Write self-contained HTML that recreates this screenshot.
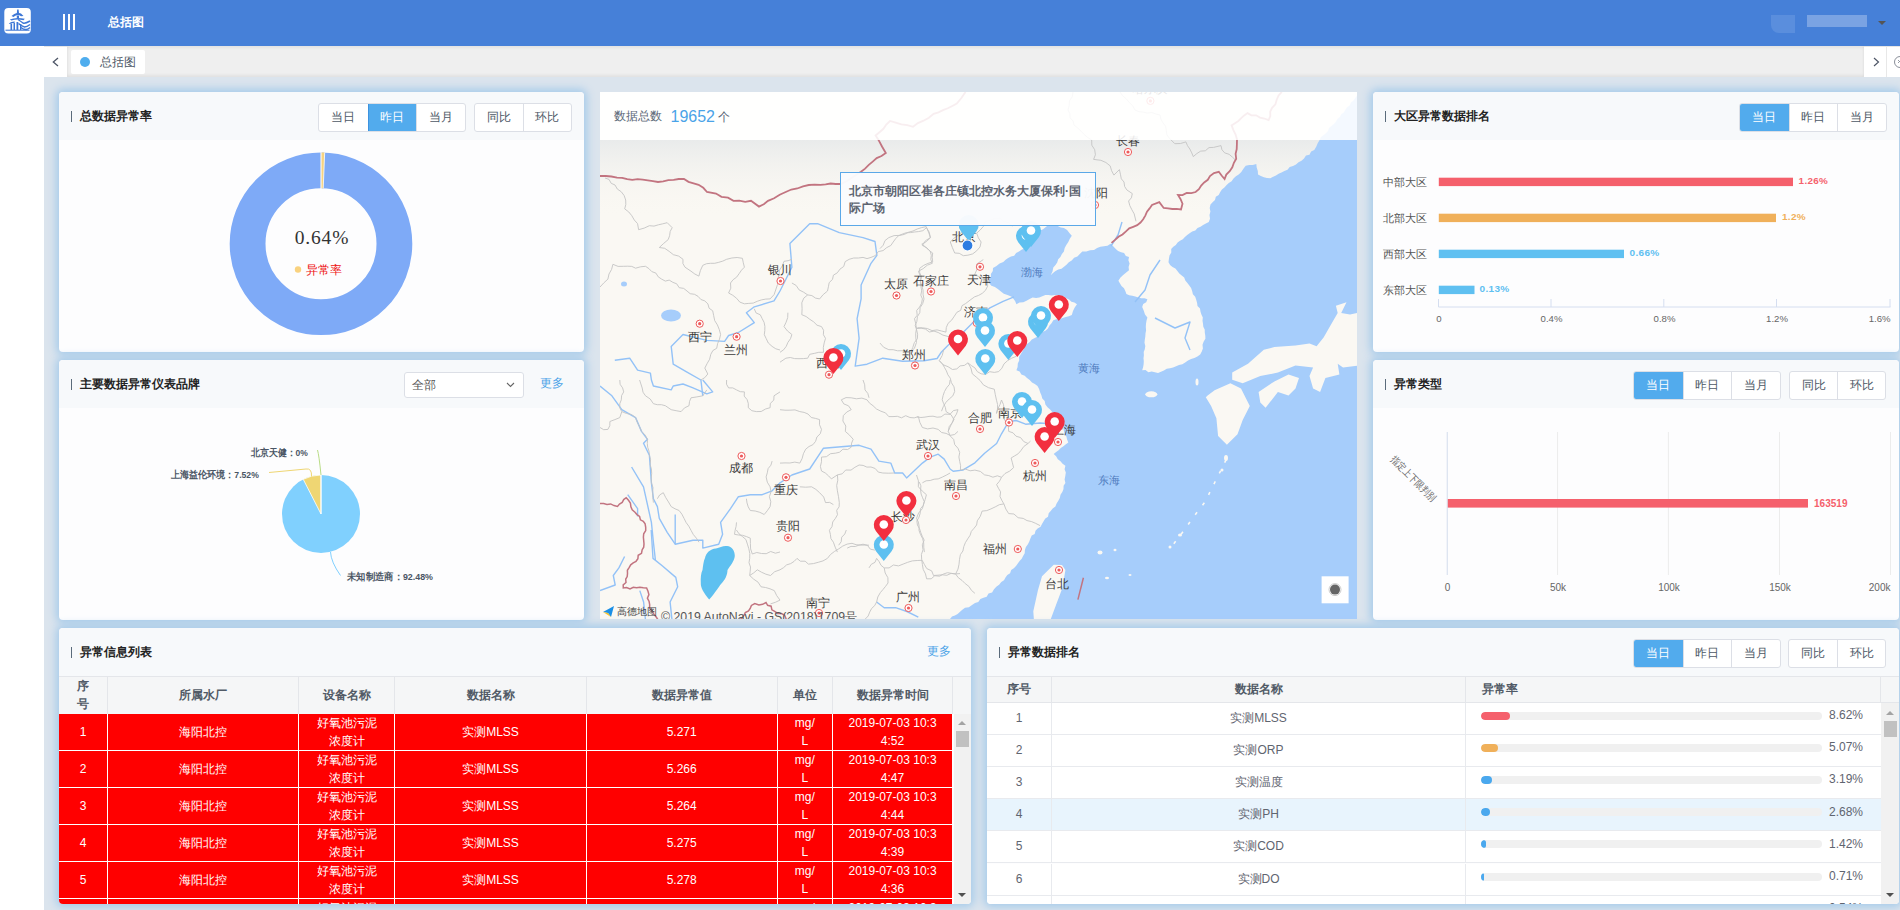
<!DOCTYPE html>
<html><head><meta charset="utf-8">
<style>
*{box-sizing:border-box;margin:0;padding:0}
html,body{width:1900px;height:910px;overflow:hidden;background:#fff;font-family:"Liberation Sans",sans-serif;color:#333}
.abs{position:absolute}
#hdr{position:absolute;left:0;top:0;width:1900px;height:46px;background:#4680d8}
#tabs{position:absolute;left:67px;top:46px;width:1797px;height:31px;background:#efefef;box-shadow:inset 0 -2px 3px rgba(0,0,0,.06), inset 0 2px 3px rgba(0,0,0,.05)}
#content{position:absolute;left:44px;top:77px;width:1856px;height:833px;background:#dbe4ed}
.panel{position:absolute;background:#fdfdfe;border-radius:4px;box-shadow:0 0 9px 3px #a6cbea;overflow:hidden}
.ph{position:absolute;left:0;top:0;width:100%;height:48px;background:#f7f9fb}
.bar{position:absolute;left:12px;top:19px;width:1.4px;height:11px;background:#5a6b7b}
.ttl{position:absolute;left:21px;top:16px;font-size:12px;font-weight:bold;color:#222;line-height:16px;white-space:nowrap}
.btns{position:absolute;display:flex;border:1px solid #dcdfe6;border-radius:3px;background:#fff;height:29px;overflow:hidden}
.btn{width:48.5px;height:27px;line-height:27px;text-align:center;font-size:12px;color:#4d5866;border-left:1px solid #dcdfe6}
.btn:first-child{border-left:none}
.b2 .btn{width:47.8px}
.btn.on{background:#52abed;color:#fff;border-color:#3d93e0}
.more{position:absolute;font-size:12px;color:#4aa3e8}
.thead{display:flex;background:#f5f6f7;border-top:1px solid #e4e6ea}
.hc{height:37px;border-right:1px solid #e4e6ea;font-size:12px;font-weight:bold;color:#515a66;text-align:center;display:flex;align-items:center;justify-content:center;line-height:18px;padding-bottom:2px}
.rrow{position:absolute;left:0;width:894px;height:37px;display:flex;background:#ff0000;border-bottom:1px solid #fff}
.rc{height:36px;border-right:1px solid #fff;color:#fff;font-size:12px;font-weight:normal;display:flex;align-items:center;justify-content:center;text-align:center;line-height:18px}
.thead2{display:flex;background:#f5f6f7;border-top:1px solid #e4e6ea;border-bottom:1px solid #e4e6ea}
.hc2{height:25.5px;line-height:25px;border-right:1px solid #e4e6ea;font-size:12px;font-weight:bold;color:#515a66}
.brow{position:absolute;left:0;width:894px;height:32.2px;display:flex;border-bottom:1px solid #e8eaee}
.bc{height:31.2px;line-height:31px;border-right:1px solid #e8eaee;font-size:12px;color:#5f6570;text-align:center}
.trk{position:absolute;left:15px;top:9px;width:341px;height:8px;border-radius:4px;background:#f0f0f0;overflow:hidden}
.fil{height:8px;border-radius:4px}
.pct{position:absolute;right:18px;top:-2.5px;font-size:12px;color:#5f6570}
</style></head><body>
<div id="hdr">
  <svg class="abs" style="left:4px;top:8px" width="27" height="26" viewBox="0 0 27 26">
  <rect x="0.3" y="0" width="26.5" height="25.5" rx="4" fill="#fff"/>
  <g fill="#3d77d6">
    <path d="M13.2,1.5 L14.6,1.5 L15,5 L12.8,5Z"/>
    <path d="M7.5,8 Q10,5.5 13.5,4.8 Q17,4.5 19.5,8 L17,8.3 Q14.5,6.5 13.5,7 Q11,7.3 9.5,9Z"/>
    <rect x="12.8" y="7.5" width="2.2" height="3"/>
    <path d="M5.8,11.5 Q12,8.8 20.8,10.8 L19.5,12.3 Q13,10.6 7.5,12.5Z"/>
    <path d="M4.8,15.5 Q7,13.4 10.8,13.5 L10.5,15 Q7.5,14.8 6,16Z"/>
    <rect x="6.5" y="15.5" width="1.6" height="6.5"/><rect x="9.5" y="15" width="1.5" height="7"/><rect x="12.5" y="14" width="1.8" height="8"/><rect x="16" y="16" width="1.4" height="6"/>
    <rect x="1.5" y="21.6" width="24" height="1.3" opacity="0.8"/>
  </g>
  <g fill="none" stroke="#3d77d6" stroke-width="1.5">
    <path d="M14,11.5 Q17,13.5 19,15 Q21,16 26,13"/>
    <path d="M14.5,15.5 Q18,18.5 20.5,19 Q23,19 26,16.5"/>
    <path d="M17,19.5 Q20,22 22.5,21.5 Q24.5,21 26,19.5"/>
  </g>
</svg>
  <div class="abs" style="left:63px;top:14px;width:2px;height:16px;background:#fff"></div>
  <div class="abs" style="left:68px;top:14px;width:2px;height:16px;background:#fff"></div>
  <div class="abs" style="left:73px;top:14px;width:2px;height:16px;background:#fff"></div>
  <div class="abs" style="left:108px;top:14px;font-size:12px;font-weight:bold;color:#fff;line-height:16px">总括图</div>
  <div class="abs" style="left:1771px;top:15px;width:24px;height:18px;background:#5a8edd;border-radius:0 0 0 8px"></div>
  <div class="abs" style="left:1807px;top:15px;width:60px;height:12px;background:#7aa3e3"></div>
  <div class="abs" style="left:1878px;top:21px;width:0;height:0;border-left:4px solid transparent;border-right:4px solid transparent;border-top:4px solid #555"></div>
</div>
<div class="abs" style="left:44px;top:46px;width:1856px;height:1px;background:#e6e6e6"></div>
<div id="tabs">
  <div class="abs" style="left:4px;top:4px;width:74px;height:23.5px;background:#fff;border-radius:2px"></div>
  <div class="abs" style="left:13px;top:11px;width:10px;height:10px;border-radius:50%;background:#4fadee"></div>
  <div class="abs" style="left:32.5px;top:7.5px;font-size:12px;line-height:16px;color:#4d5866">总括图</div>
</div>
<svg class="abs" style="left:50px;top:55px" width="12" height="14" viewBox="0 0 12 14"><path d="M8,3 L3.3,7 L8,11" fill="none" stroke="#4d5566" stroke-width="1.3"/></svg>
<svg class="abs" style="left:1869px;top:54px" width="14" height="16" viewBox="0 0 14 16"><path d="M5,4 L9.5,8 L5,12" fill="none" stroke="#4d5566" stroke-width="1.15"/></svg>
<div class="abs" style="left:1885.5px;top:47px;width:1px;height:30px;background:#e8e8e8"></div>
<svg class="abs" style="left:1890px;top:54px" width="10" height="16" viewBox="0 0 10 16"><circle cx="10" cy="8" r="5.5" fill="none" stroke="#8a8f99" stroke-width="1"/><path d="M8,6 L11,9 M11,6 L8,9" stroke="#8a8f99" stroke-width="0.9"/></svg>
<div id="content"></div>

<!-- P1 -->
<div class="panel" style="left:59px;top:92px;width:525px;height:260px">
  <div class="ph"><div class="bar"></div><div class="ttl">总数据异常率</div>
    <div class="btns" style="left:259px;top:11px"><div class="btn">当日</div><div class="btn on">昨日</div><div class="btn">当月</div></div>
    <div class="btns b2" style="left:415px;top:11px"><div class="btn">同比</div><div class="btn">环比</div></div>
  </div>
</div>
<svg class="abs" style="left:59px;top:140px" width="525" height="212" viewBox="59 140 525 212">
  <circle cx="321" cy="243.8" r="73.4" fill="none" stroke="#7eaaf7" stroke-width="35.8"/>
  <path d="M321.00,152.50A91.3,91.3 0 0 1 324.66,152.57L323.23,188.34A55.5,55.5 0 0 0 321.00,188.30Z" fill="#f6d380"/>
  <line x1="321" y1="150" x2="321" y2="190" stroke="#fff" stroke-width="1"/>
  <line x1="324.66" y1="152.57" x2="323.23" y2="188.34" stroke="#fff" stroke-width="0.8"/>
  <text x="322" y="243.6" text-anchor="middle" font-family="Liberation Serif" font-size="19.5" letter-spacing="0.8" fill="#333">0.64%</text>
  <circle cx="298" cy="269.5" r="3.2" fill="#f9d27f"/>
  <text x="306" y="273.8" font-size="12" fill="#ee1111">异常率</text>
</svg>
<!-- Map -->
<!--MAP--><svg class="abs" style="left:600px;top:92px" width="757" height="527" viewBox="600 92 757 527" font-family="Liberation Sans">
<defs><linearGradient id="fog" x1="0" y1="0" x2="0" y2="1"><stop offset="0" stop-color="#e9ebeb"/><stop offset="1" stop-color="#f9f7f1" stop-opacity="0"/></linearGradient></defs>
<rect x="600" y="92" width="757" height="527" fill="#faf8f3"/>
<rect x="600" y="140" width="757" height="75" fill="url(#fog)"/>
<path d="M1357.0,95.5 L1355.3,98.0 L1353.5,100.6 L1350.9,102.4 L1349.7,105.4 L1347.1,107.2 L1345.4,109.7 L1343.8,112.4 L1341.2,114.2 L1339.9,117.1 L1337.4,119.0 L1335.9,121.8 L1333.9,124.1 L1331.5,126.0 L1329.0,127.9 L1328.0,131.1 L1325.9,133.3 L1323.4,135.2 L1321.0,137.1 L1319.6,140.0 L1317.7,143.3 L1316.2,146.8 L1314.3,150.0 L1311.1,151.4 L1309.5,154.7 L1306.0,155.6 L1304.0,158.5 L1301.5,160.8 L1298.5,162.3 L1296.0,164.6 L1293.0,166.1 L1289.7,167.1 L1287.5,169.8 L1284.4,171.1 L1281.5,172.4 L1278.6,173.7 L1276.0,175.6 L1273.1,176.7 L1270.3,178.2 L1267.0,178.1 L1263.9,177.2 L1260.9,176.0 L1258.0,174.6 L1257.8,171.0 L1256.7,167.6 L1256.3,164.1 L1252.8,165.0 L1249.2,165.1 L1245.7,165.8 L1243.4,168.8 L1241.3,171.9 L1238.7,174.6 L1235.9,176.3 L1233.5,178.6 L1231.6,181.3 L1228.8,183.0 L1226.4,185.2 L1224.4,187.6 L1221.9,189.6 L1220.1,192.2 L1218.7,195.1 L1215.8,196.7 L1215.0,200.1 L1212.6,202.2 L1210.5,204.5 L1209.7,208.0 L1210.4,211.6 L1209.5,215.1 L1210.0,218.7 L1208.8,222.1 L1205.9,223.4 L1203.1,224.9 L1200.5,226.8 L1197.5,227.9 L1195.3,230.4 L1192.2,231.4 L1189.6,233.3 L1187.2,235.1 L1184.9,237.1 L1182.8,239.2 L1180.0,240.7 L1177.6,242.5 L1175.8,245.1 L1173.3,246.8 L1171.2,249.0 L1171.3,252.5 L1169.5,255.6 L1168.9,258.9 L1168.5,262.3 L1170.1,265.1 L1172.5,267.1 L1175.4,268.6 L1177.4,270.9 L1179.3,273.4 L1181.7,275.4 L1184.2,277.6 L1185.3,280.6 L1187.4,283.0 L1189.3,285.6 L1191.1,288.1 L1192.2,291.2 L1192.9,294.3 L1195.2,296.8 L1196.2,299.8 L1197.1,302.9 L1197.5,306.1 L1200.0,308.5 L1200.5,311.7 L1201.5,314.7 L1202.8,317.6 L1202.5,320.7 L1203.0,323.7 L1203.3,326.7 L1204.7,329.6 L1204.8,332.7 L1205.3,335.7 L1205.4,338.7 L1203.7,341.6 L1202.5,344.8 L1202.9,348.4 L1201.8,351.5 L1200.2,354.5 L1197.4,356.4 L1194.4,357.9 L1191.1,359.0 L1188.0,360.4 L1185.2,362.4 L1182.4,364.3 L1179.0,365.0 L1176.1,366.3 L1173.1,367.5 L1170.0,368.3 L1166.7,368.8 L1163.9,370.4 L1161.0,371.8 L1158.0,373.0 L1154.9,372.3 L1151.7,371.6 L1148.4,372.2 L1145.5,370.1 L1142.2,370.3 L1143.1,367.3 L1143.6,364.4 L1143.8,361.3 L1143.5,358.2 L1143.9,355.2 L1143.7,352.1 L1144.8,349.2 L1145.3,346.1 L1144.5,342.8 L1144.8,339.7 L1145.3,336.5 L1145.5,333.4 L1146.1,330.2 L1145.8,327.0 L1146.0,323.8 L1146.5,320.7 L1147.4,317.6 L1145.0,314.4 L1143.7,310.6 L1142.2,307.0 L1143.2,303.9 L1146.2,302.2 L1147.4,299.2 L1144.5,298.2 L1141.2,298.3 L1138.3,297.4 L1135.3,296.4 L1132.3,295.7 L1129.2,295.3 L1126.4,293.9 L1125.3,290.9 L1124.0,288.2 L1121.5,286.0 L1120.0,283.4 L1118.4,280.7 L1120.5,277.5 L1123.2,274.9 L1126.2,272.6 L1129.0,270.2 L1128.6,266.9 L1129.6,263.6 L1128.4,260.3 L1129.0,257.0 L1125.9,256.1 L1124.1,253.1 L1121.1,252.2 L1118.1,251.1 L1115.8,249.0 L1113.2,246.3 L1110.5,243.8 L1107.5,245.8 L1103.9,246.2 L1100.3,246.7 L1097.1,248.1 L1094.0,250.0 L1090.1,250.2 L1086.3,251.5 L1082.3,251.6 L1079.8,254.0 L1077.4,256.5 L1074.1,257.8 L1071.7,260.4 L1068.8,262.2 L1066.5,264.8 L1064.0,266.8 L1061.5,268.7 L1058.3,269.6 L1055.5,271.1 L1053.0,273.0 L1050.7,275.3 L1052.5,271.5 L1053.3,267.4 L1055.5,265.1 L1057.2,262.4 L1058.2,259.2 L1060.4,256.9 L1061.9,254.1 L1063.9,251.6 L1064.7,248.1 L1066.3,244.9 L1068.3,241.9 L1069.8,238.8 L1071.8,235.8 L1069.4,233.0 L1067.1,230.0 L1063.9,228.0 L1060.7,227.6 L1057.7,226.1 L1054.5,225.5 L1051.3,225.0 L1048.0,225.3 L1045.5,227.2 L1043.1,229.2 L1040.2,230.5 L1039.0,233.4 L1037.5,236.1 L1035.9,238.7 L1033.6,240.9 L1032.2,243.7 L1029.2,244.7 L1026.6,246.3 L1024.3,248.5 L1021.5,249.8 L1019.0,251.6 L1016.1,252.9 L1014.2,255.7 L1011.0,256.6 L1008.1,257.9 L1005.6,259.8 L1003.3,262.0 L999.6,263.6 L996.5,266.0 L993.0,268.0 L992.8,271.1 L990.9,273.9 L990.9,277.1 L989.3,279.9 L989.0,283.0 L991.4,285.7 L994.9,286.9 L997.8,289.0 L1000.6,291.2 L1003.8,293.7 L1007.5,295.0 L1011.2,296.4 L1013.4,298.7 L1015.2,301.3 L1016.4,304.3 L1019.5,302.4 L1023.3,302.3 L1026.5,300.8 L1029.6,299.0 L1032.6,297.6 L1036.1,298.0 L1039.3,297.5 L1042.3,296.2 L1045.4,295.1 L1048.5,295.0 L1051.6,295.6 L1054.7,295.1 L1057.8,295.1 L1060.8,297.0 L1063.9,296.4 L1066.4,298.2 L1069.1,299.6 L1071.4,301.8 L1074.4,302.6 L1077.0,304.3 L1074.7,307.5 L1073.0,311.1 L1071.8,314.9 L1068.9,316.3 L1065.8,317.1 L1062.7,317.9 L1059.6,318.9 L1056.3,319.2 L1053.3,320.2 L1051.7,323.1 L1049.5,325.5 L1047.9,328.5 L1045.4,330.7 L1042.3,332.0 L1040.3,334.7 L1037.6,336.4 L1034.8,338.1 L1031.8,339.5 L1029.7,342.1 L1027.0,343.9 L1024.8,346.1 L1023.8,349.1 L1022.2,351.7 L1020.6,354.4 L1019.0,357.0 L1019.2,360.5 L1017.8,363.6 L1017.6,367.0 L1016.4,370.2 L1019.6,371.5 L1021.4,374.6 L1024.7,375.7 L1027.0,378.1 L1029.7,380.0 L1032.0,382.4 L1034.8,384.1 L1037.5,386.0 L1039.1,389.0 L1040.1,392.2 L1041.4,395.3 L1042.3,398.5 L1044.7,401.1 L1045.4,404.5 L1047.5,407.2 L1050.1,409.5 L1052.3,412.1 L1053.8,415.3 L1056.4,417.7 L1058.6,420.3 L1062.4,424.9 L1063.3,427.9 L1063.9,430.9 L1064.6,433.9 L1066.4,436.5 L1067.1,439.5 L1068.3,442.4 L1065.9,444.3 L1063.4,446.2 L1060.8,447.9 L1058.6,450.2 L1056.1,452.0 L1053.7,454.0 L1056.1,456.3 L1057.8,459.2 L1060.5,461.3 L1062.6,463.8 L1065.4,465.7 L1064.6,469.2 L1065.8,472.6 L1065.3,476.1 L1064.6,479.5 L1065.4,483.0 L1063.6,485.7 L1063.5,489.1 L1062.3,492.1 L1060.5,494.8 L1059.8,497.9 L1058.3,500.8 L1056.6,503.5 L1055.4,506.5 L1052.7,508.4 L1050.7,510.9 L1048.7,513.3 L1048.0,516.7 L1045.3,518.6 L1043.6,521.3 L1042.0,524.0 L1040.6,526.8 L1037.6,528.4 L1035.5,530.7 L1034.7,534.0 L1031.7,535.6 L1030.4,538.5 L1029.3,541.5 L1027.9,544.3 L1025.9,546.9 L1024.9,549.9 L1024.7,553.2 L1023.1,555.9 L1021.7,558.8 L1019.6,561.1 L1017.8,563.6 L1016.0,566.1 L1013.8,568.3 L1011.2,570.1 L1010.1,573.3 L1007.3,575.0 L1005.5,577.4 L1004.0,580.3 L1001.3,582.0 L999.1,584.7 L996.3,586.7 L994.0,589.3 L992.1,592.4 L988.5,593.6 L986.7,596.7 L983.5,597.8 L980.4,599.1 L978.3,602.1 L975.0,603.0 L972.0,605.1 L968.9,607.2 L965.0,607.8 L962.0,610.0 L959.8,612.1 L957.6,614.1 L954.9,615.5 L952.0,616.6 L950.0,619.0 L948.5,621.8 L948.0,625.0 L951.0,624.6 L954.0,624.4 L957.0,625.8 L960.0,625.1 L963.0,625.4 L966.0,624.3 L969.1,624.2 L972.1,625.3 L975.1,624.9 L978.1,624.2 L981.1,625.8 L984.1,625.2 L987.1,625.5 L990.1,624.3 L993.1,625.6 L996.1,624.2 L999.1,625.7 L1002.1,624.9 L1005.1,624.7 L1008.1,625.1 L1011.2,625.8 L1014.2,624.6 L1017.2,624.3 L1020.2,625.0 L1023.2,624.5 L1026.2,624.3 L1029.2,624.4 L1032.2,624.2 L1035.2,624.5 L1038.2,624.7 L1041.2,624.6 L1044.2,625.5 L1047.2,624.6 L1050.2,625.0 L1053.3,624.4 L1056.3,624.7 L1059.3,624.1 L1062.3,624.6 L1065.3,624.1 L1068.3,625.4 L1071.3,625.1 L1074.3,624.4 L1077.3,625.0 L1080.3,625.8 L1083.3,624.3 L1086.3,625.6 L1089.3,624.9 L1092.4,625.0 L1095.4,625.6 L1098.4,624.8 L1101.4,625.0 L1104.4,625.3 L1107.4,625.9 L1110.4,624.7 L1113.4,625.6 L1116.4,625.4 L1119.4,625.2 L1122.4,624.8 L1125.4,624.7 L1128.4,624.2 L1131.4,624.3 L1134.5,624.2 L1137.5,625.4 L1140.5,624.6 L1143.5,624.4 L1146.5,624.3 L1149.5,625.6 L1152.5,625.7 L1155.5,625.3 L1158.5,624.6 L1161.5,624.5 L1164.5,624.6 L1167.5,624.9 L1170.5,624.4 L1173.5,624.9 L1176.6,624.6 L1179.6,625.8 L1182.6,625.9 L1185.6,625.1 L1188.6,624.5 L1191.6,625.8 L1194.6,624.7 L1197.6,624.7 L1200.6,624.1 L1203.6,624.8 L1206.6,625.0 L1209.6,625.0 L1212.6,624.5 L1215.6,625.0 L1218.7,624.1 L1221.7,624.6 L1224.7,624.3 L1227.7,624.8 L1230.7,624.2 L1233.7,624.1 L1236.7,624.6 L1239.7,624.5 L1242.7,625.2 L1245.7,625.1 L1248.7,625.5 L1251.7,625.3 L1254.7,625.4 L1257.8,625.7 L1260.8,624.8 L1263.8,624.7 L1266.8,625.9 L1269.8,624.4 L1272.8,625.4 L1275.8,625.3 L1278.8,624.2 L1281.8,625.6 L1284.8,625.7 L1287.8,625.2 L1290.8,625.4 L1293.8,625.6 L1296.8,624.4 L1299.9,625.0 L1302.9,625.0 L1305.9,625.6 L1308.9,625.5 L1311.9,625.6 L1314.9,625.2 L1317.9,625.7 L1320.9,625.3 L1323.9,625.3 L1326.9,624.5 L1329.9,624.2 L1332.9,624.3 L1335.9,624.7 L1338.9,624.3 L1342.0,625.6 L1345.0,625.1 L1348.0,625.2 L1351.0,625.2 L1354.0,625.3 L1357.0,625.0 L1360.0,625.0 L1359.1,622.0 L1360.5,619.0 L1360.4,616.0 L1360.0,613.0 L1360.1,609.9 L1360.3,606.9 L1359.2,603.9 L1360.4,600.9 L1359.6,597.9 L1359.2,594.9 L1359.6,591.9 L1360.4,588.9 L1359.5,585.9 L1360.4,582.8 L1360.9,579.8 L1360.0,576.8 L1359.8,573.8 L1360.0,570.8 L1360.3,567.8 L1360.5,564.8 L1360.2,561.8 L1360.3,558.8 L1359.2,555.7 L1359.4,552.7 L1359.6,549.7 L1360.4,546.7 L1359.6,543.7 L1360.1,540.7 L1359.1,537.7 L1359.2,534.7 L1359.6,531.6 L1360.3,528.6 L1360.3,525.6 L1360.3,522.6 L1359.6,519.6 L1360.0,516.6 L1359.9,513.6 L1359.9,510.6 L1359.3,507.6 L1360.7,504.5 L1359.5,501.5 L1360.9,498.5 L1360.8,495.5 L1359.1,492.5 L1359.9,489.5 L1360.6,486.5 L1360.8,483.5 L1359.9,480.5 L1359.6,477.4 L1359.5,474.4 L1360.8,471.4 L1359.5,468.4 L1360.1,465.4 L1359.4,462.4 L1360.0,459.4 L1360.8,456.4 L1359.3,453.4 L1360.6,450.3 L1360.0,447.3 L1360.7,444.3 L1360.4,441.3 L1359.5,438.3 L1360.7,435.3 L1360.0,432.3 L1359.1,429.3 L1359.1,426.3 L1360.0,423.2 L1359.9,420.2 L1359.6,417.2 L1359.4,414.2 L1359.7,411.2 L1359.7,408.2 L1360.6,405.2 L1359.1,402.2 L1360.5,399.2 L1360.6,396.1 L1359.3,393.1 L1360.8,390.1 L1360.4,387.1 L1360.7,384.1 L1359.6,381.1 L1359.8,378.1 L1359.8,375.1 L1360.9,372.1 L1360.2,369.0 L1359.7,366.0 L1359.9,363.0 L1359.6,360.0 L1359.2,357.0 L1359.3,354.0 L1360.6,351.0 L1359.6,348.0 L1360.8,344.9 L1359.5,341.9 L1359.6,338.9 L1360.0,335.9 L1359.4,332.9 L1359.8,329.9 L1360.8,326.9 L1360.7,323.9 L1360.6,320.9 L1360.2,317.8 L1360.7,314.8 L1360.8,311.8 L1360.1,308.8 L1360.4,305.8 L1359.2,302.8 L1360.4,299.8 L1359.9,296.8 L1360.5,293.8 L1360.3,290.7 L1359.6,287.7 L1359.2,284.7 L1360.8,281.7 L1359.3,278.7 L1359.9,275.7 L1359.7,272.7 L1359.6,269.7 L1360.4,266.7 L1360.9,263.6 L1359.6,260.6 L1360.3,257.6 L1359.6,254.6 L1360.1,251.6 L1359.8,248.6 L1359.4,245.6 L1359.4,242.6 L1359.5,239.6 L1360.7,236.5 L1360.0,233.5 L1359.5,230.5 L1360.7,227.5 L1360.9,224.5 L1359.9,221.5 L1359.4,218.5 L1359.4,215.5 L1359.3,212.5 L1359.7,209.4 L1359.3,206.4 L1359.5,203.4 L1359.6,200.4 L1360.1,197.4 L1360.7,194.4 L1360.4,191.4 L1359.8,188.4 L1359.8,185.4 L1360.0,182.3 L1359.8,179.3 L1359.7,176.3 L1359.2,173.3 L1359.6,170.3 L1360.8,167.3 L1359.3,164.3 L1360.0,161.3 L1360.2,158.2 L1360.7,155.2 L1359.5,152.2 L1359.6,149.2 L1359.5,146.2 L1359.8,143.2 L1359.9,140.2 L1360.8,137.2 L1360.6,134.2 L1360.7,131.1 L1359.1,128.1 L1359.2,125.1 L1360.4,122.1 L1360.7,119.1 L1360.0,116.1 L1360.2,113.1 L1359.1,110.1 L1359.8,107.1 L1360.8,104.0 L1360.6,101.0 L1360.6,98.0 L1360.9,95.0 L1360.0,92.0 Z" fill="#a6cdfb"/>
<path d="M1033.3,611.3 L1038.0,590.0 L1042.0,576.3 L1053.7,564.7 L1062.0,565.0 L1065.4,570.0 L1062.4,588.0 L1056.0,605.0 L1050.8,619.0 L1034.0,621.0 Z" fill="#faf8f3"/>
<path d="M1207.6,395.5 L1214.6,390.2 L1230.4,383.2 L1241.0,388.5 L1244.5,395.5 L1249.8,406.0 L1242.7,420.1 L1237.5,434.2 L1226.9,444.7 L1218.1,435.9 L1216.4,418.3 L1211.1,406.0 L1205.8,397.2 Z" fill="#faf8f3"/>
<path d="M1232.2,379.7 L1232.2,372.6 L1248.0,363.8 L1263.8,349.8 L1274.4,347.1 L1295.5,345.4 L1309.5,343.6 L1316.6,346.3 L1323.6,337.5 L1330.6,325.2 L1337.7,312.9 L1335.9,305.8 L1346.5,302.3 L1341.2,312.9 L1350.0,314.6 L1358.0,312.9 L1358.0,365.6 L1343.0,367.4 L1337.7,363.8 L1339.4,374.4 L1325.4,377.9 L1320.1,392.0 L1313.1,388.5 L1309.5,376.1 L1313.1,367.4 L1295.5,365.6 L1277.9,372.6 L1260.3,376.1 L1242.7,383.2 Z" fill="#faf8f3"/>
<path d="M1258.6,392.0 L1274.4,381.4 L1288.5,374.4 L1299.0,377.9 L1295.5,388.5 L1288.5,395.5 L1277.9,392.0 L1265.6,407.8 L1260.3,402.5 Z" fill="#faf8f3"/>
<ellipse cx="1151.3" cy="394.3" rx="6" ry="3" fill="#faf8f3"/>
<g fill="#faf8f3"><ellipse cx="1197" cy="382" rx="1.5" ry="3.5"/><ellipse cx="1226" cy="458" rx="2" ry="3"/><ellipse cx="1222" cy="470" rx="1.5" ry="1.5"/><path d="M1226,460 L1215,482 L1205,502 L1195,515 L1182,533 L1172,546" fill="none" stroke="#faf8f3" stroke-width="1.6" stroke-dasharray="3 9"/><ellipse cx="1170" cy="547" rx="1.5" ry="1.5"/><ellipse cx="1180" cy="535" rx="2" ry="1.5"/><ellipse cx="1100" cy="552.5" rx="2.5" ry="2"/><ellipse cx="1115" cy="550" rx="1.5" ry="1.2"/><ellipse cx="1130" cy="575" rx="1.5" ry="1"/><ellipse cx="1107" cy="578" rx="2" ry="1.2"/></g>
<ellipse cx="671" cy="315.4" rx="10" ry="6" fill="#a6cdfb"/>
<ellipse cx="624" cy="284" rx="3" ry="2.5" fill="#a6cdfb"/>
<g fill="none" stroke="#93c2f7" stroke-width="1.4" stroke-linejoin="round"><path d="M780.0,291.0 L774.0,300.9 L754.3,306.8 L746.4,312.7 L754.3,322.6 L738.4,332.5 L728.6,335.5 L724.6,341.4 L706.8,340.4 L683.0,334.5 L671.2,346.4 L673.2,364.2 L687.0,372.1 L700.9,380.0 L702.8,395.8"/><path d="M614.8,360.2 L629.7,358.2 L637.6,370.1 L650.4,373.1 L651.4,380.0 L653.4,386.0 L671.2,389.9 L673.2,386.0 L683.0,384.0 L693.0,387.9 L706.8,393.8 L712.7,391.9 L702.8,380.0"/><path d="M780.0,291.0 L791.9,267.2 L789.9,243.5 L809.7,223.7 L817.6,223.7 L839.3,232.6 L863.0,237.6 L875.0,241.5 L876.9,255.4 L871.0,263.3 L861.1,285.0 L861.1,298.9 L857.1,318.7 L859.1,338.4 L855.2,366.1 L867.0,364.2 L882.8,358.2 L902.6,361.2 L924.0,360.7 L937.1,358.5 L941.5,351.9 L948.1,345.3 L963.5,332.1 L974.5,321.1 L989.9,307.9 L1003.1,301.3 L1014.0,296.9"/><path d="M600.0,386.0 L611.9,395.8 L621.8,409.7 L635.6,417.6 L641.5,431.4 L647.5,439.3 L643.5,443.3 L649.4,455.2 L651.4,482.8 L653.4,498.7 L657.4,506.6 L659.3,518.4 L667.2,532.3 L675.2,544.2 L693.0,540.2 L702.8,540.2 L702.8,548.1 L718.7,544.2 L722.6,534.3 L720.6,522.4 L730.5,508.6 L738.4,496.7 L750.3,494.7 L762.2,494.7 L772.1,490.8 L780.0,482.8 L791.9,475.0 L803.7,471.0 L809.7,469.0 L823.5,448.2 L859.1,445.3 L871.0,449.2 L878.9,461.1 L890.8,463.1 L894.7,473.0 L902.6,473.0 L906.6,477.9 L922.4,463.1 L930.3,457.1 L938.2,454.2 L944.2,459.1 L950.1,469.0 L953.2,471.3 L962.8,470.1 L974.9,462.8 L984.6,453.2 L996.6,443.5 L1001.5,433.8 L1008.7,421.7 L1016.0,420.5 L1025.6,424.2 L1040.1,423.0 L1054.6,424.2"/><path d="M631.6,467.0 L643.5,486.8 L651.4,522.4 L653.4,542.2 L655.4,560.0"/><path d="M627.7,494.7 L637.6,508.6 L637.6,516.5"/><path d="M675.2,514.5 L675.2,544.2"/><path d="M651.2,530.0 L653.0,558.4 L662.5,566.0 L675.8,577.4 L677.7,586.8 L670.1,602.0 L672.0,620.0"/><path d="M624.6,556.5 L618.9,567.9 L613.3,575.5 L615.2,585.0 L600.0,590.6"/><path d="M639.8,590.6 L643.6,602.0 L645.5,620.0"/><path d="M876.6,602.0 L884.2,607.7 L895.6,607.7 L906.9,611.5 L918.3,617.2"/><path d="M1111.0,246.0 L1118.0,235.0 L1122.0,222.0"/><path d="M1160.0,260.0 L1150.0,275.0 L1145.0,290.0 L1135.0,302.0"/><path d="M1155.0,318.0 L1175.0,328.0 L1190.0,322.0 L1185.0,338.0 L1190.0,350.0"/></g>
<g fill="none" stroke="#c4c4c4" stroke-width="0.9" stroke-linejoin="round"><path d="M625.7,200.0 L625.8,204.5 L624.7,208.9 L628.7,211.9 L631.8,215.7 L634.3,220.0 L637.6,223.7 L638.6,229.7 L644.2,228.1 L649.4,225.7 L654.0,226.1 L658.4,224.8 L662.8,223.8 L667.2,222.7 L672.2,227.7 L670.2,231.4 L669.6,235.7 L668.2,239.6 L663.7,243.4 L659.3,247.5 L664.7,248.3 L669.2,251.4 L673.4,254.7 L678.7,256.1 L683.0,259.3 L682.9,263.5 L685.0,267.2 L691.0,271.2 L694.8,274.0 L698.9,276.1 L700.4,270.5 L702.8,265.3 L706.6,263.7 L710.6,263.3 L714.7,263.3 L718.8,262.3 L722.8,261.1 L726.6,259.3 L731.8,258.0 L737.1,257.5 L742.4,258.3 L743.3,262.8 L744.4,267.2 L741.5,270.2 L739.1,273.7 L736.6,277.2 L733.1,279.7 L730.5,283.0 L730.8,288.2 L728.6,293.0 L732.8,295.3 L736.6,298.3 L739.8,302.1 L744.4,303.8 L748.8,303.4 L753.2,303.1 L757.2,301.3 L761.4,299.9 L765.7,299.1 L770.1,298.9 L774.1,294.6 L776.0,289.0 L777.5,284.5 L777.5,279.7 L779.0,275.2 L779.5,270.1 L782.3,265.9 L784.0,261.3 L788.1,260.7 L791.9,259.3"/><path d="M600.0,287.0 L603.8,282.9 L607.9,279.1 L609.0,274.0 L611.6,269.4 L612.9,264.3 L618.1,266.4 L623.7,266.3 L627.8,266.2 L631.8,266.4 L635.6,268.2 L640.5,266.8 L645.5,266.3 L648.9,268.6 L651.8,271.6 L655.9,273.1 L658.2,276.8 L661.6,279.1 L665.3,281.1 L669.2,280.1 L672.8,282.3 L676.7,283.8 L679.2,287.7 L683.7,288.4 L687.0,291.0 L690.2,293.7 L694.5,294.3 L698.0,296.3 L700.9,299.5 L704.8,300.9 L707.9,303.9 L709.1,308.2 L712.7,310.8 L713.7,315.7 L714.7,320.6 L717.4,324.9 L719.3,329.6 L720.6,334.5 L719.5,339.2 L717.6,343.6 L716.7,348.3 L712.9,350.5 L710.8,354.3 L709.6,359.3 L707.1,363.6 L704.8,368.1 L707.8,374.0 L704.8,377.6 L700.9,380.0"/><path d="M754.3,308.8 L756.0,312.9 L760.3,314.8 L762.2,318.7 L764.1,322.4 L764.9,326.4 L764.8,330.5 L764.3,334.7 L766.1,338.4 L768.3,343.0 L772.1,346.4 L775.8,348.8 L780.0,350.0"/><path d="M625.7,200.0 L624.1,195.5 L621.3,191.8 L617.3,189.0 L615.0,185.0 L611.2,183.3 L609.0,179.4 L605.0,178.0"/><path d="M871.0,257.4 L875.3,255.6 L878.3,251.6 L883.1,250.6 L886.7,247.6 L890.8,245.5 L893.2,242.0 L895.7,238.6 L898.7,235.6 L902.5,234.0 L906.3,232.7 L910.4,232.6 L914.4,232.0 L918.4,231.6 L922.9,230.7 L926.4,227.7 L929.3,232.3 L930.3,237.6 L925.5,240.7 L922.4,245.5 L926.8,247.8 L930.3,251.4 L931.3,255.3 L930.8,259.5 L932.3,263.3 L927.3,265.2 L923.1,268.7 L918.4,271.2 L920.6,276.9 L920.4,283.0 L921.0,287.0 L921.7,290.9 L920.8,295.1 L922.4,298.9 L921.6,303.2 L919.6,307.0 L916.7,310.4 L917.2,315.2 L914.5,318.7 L915.7,323.6 L916.5,328.6 L915.7,333.2 L915.8,337.8 L916.5,342.4 L914.5,348.0 L910.5,352.3"/><path d="M916.5,328.6 L921.1,328.2 L925.4,329.0 L929.3,332.0 L934.0,331.1 L938.2,332.5 L942.9,335.1 L948.1,336.5 L952.2,336.9 L956.0,334.8 L960.0,334.5"/><path d="M791.9,283.0 L796.2,285.5 L799.1,289.9 L803.6,292.2 L807.7,294.9 L811.9,295.6 L815.5,298.1 L819.6,298.9 L823.2,294.6 L827.5,291.0 L828.4,286.8 L829.2,282.6 L832.5,279.4 L833.4,275.2 L837.3,272.8 L840.0,269.1 L843.7,266.5 L845.2,261.6 L849.2,259.3 L853.7,258.0 L858.4,258.0 L863.0,257.4 L867.0,258.6 L871.0,257.4"/><path d="M807.7,294.9 L803.8,298.1 L801.8,302.8 L802.1,308.8 L801.8,314.7 L806.1,316.5 L809.8,319.3 L813.6,321.8 L817.0,325.2 L821.5,326.6 L823.6,330.3 L823.4,334.7 L825.5,338.4 L824.2,342.9 L823.3,347.5 L823.5,352.3 L818.8,352.3 L814.3,353.4 L809.7,354.3 L807.7,358.2 L803.3,358.6 L799.0,358.7 L794.6,358.6 L790.3,357.5 L785.9,358.2 L780.0,362.2"/><path d="M787.9,312.7 L787.7,317.6 L786.1,322.2 L784.0,326.6 L787.5,331.0 L791.9,334.5 L790.5,338.7 L787.9,342.4 L786.2,346.4 L783.6,349.8 L780.0,352.3"/><path d="M950.3,242.0 L952.4,247.6 L954.7,253.0 L959.2,253.3 L963.3,255.7 L967.9,255.2 L972.7,253.9 L976.7,250.8 L980.0,247.0 L981.1,242.0 L978.4,237.9 L976.7,233.2 L971.7,233.9 L966.8,233.4 L962.0,232.0 L958.1,235.3 L953.8,238.3 L950.3,242.0"/><path d="M926.2,226.6 L928.5,232.0 L930.5,237.6 L926.6,241.5 L921.8,244.2 L925.6,247.0 L928.9,250.3 L932.7,253.0 L932.2,257.4 L932.7,261.8 L928.0,263.4 L923.6,265.4 L919.6,268.4 L919.7,272.8 L921.7,277.0 L920.4,281.6 L921.8,285.9 L923.1,290.2 L923.1,294.7 L924.0,299.1 L922.7,303.6 L920.1,307.7 L919.8,312.6 L917.4,316.7 L916.9,321.3 L915.2,325.5 L916.6,329.8 L917.6,334.2 L917.4,338.7 L914.3,342.7 L912.8,347.4 L910.8,351.9"/><path d="M917.4,327.7 L922.4,327.8 L927.3,328.5 L932.0,330.6 L937.1,329.9 L941.5,331.0 L945.9,332.1 L946.3,327.5 L948.1,323.3 L951.7,320.1 L954.3,316.2 L956.9,312.3 L960.7,310.3 L962.0,305.7 L965.7,303.5 L970.1,300.1 L974.5,296.9 L978.6,295.4 L982.3,293.3 L985.5,290.3 L987.6,286.2 L987.7,281.5"/><path d="M983.3,259.6 L976.7,264.0 L976.8,269.7 L974.5,274.9 L979.1,276.6 L983.7,278.4 L987.7,281.5"/><path d="M943.7,349.7 L942.2,355.5 L939.3,360.7 L943.0,364.7 L948.0,366.7 L952.5,369.5 L956.8,368.9 L960.1,365.9 L964.4,365.4 L967.9,362.9 L971.3,365.5 L974.9,367.9 L977.3,371.6 L981.1,373.8 L985.6,374.4 L989.8,371.7 L994.3,372.4 L998.7,371.6 L1001.9,368.2 L1004.0,363.9 L1007.5,360.7 L1011.7,358.2 L1016.3,356.3"/><path d="M939.3,360.7 L942.3,363.7 L944.4,367.3 L946.4,370.9 L947.9,374.8 L950.3,378.2 L951.4,382.7 L954.0,386.8 L954.7,391.4 L952.8,395.9 L949.2,399.0 L945.9,402.4 L943.3,406.6 L941.5,411.2"/><path d="M967.9,362.9 L970.9,368.0 L972.3,373.8 L976.3,377.1 L980.2,380.6 L983.3,384.8 L988.5,387.7 L994.3,389.2 L995.3,394.7 L996.5,400.2 L997.6,404.6 L997.5,409.0 L996.5,413.4 L997.9,408.8 L1000.0,404.5 L1001.5,400.0"/><path d="M880.0,248.6 L883.2,245.2 L885.0,240.6 L888.8,237.6 L894.1,235.6 L899.8,235.4 L904.4,234.4 L908.5,232.2 L913.0,231.0 L917.2,229.0 L921.6,227.6 L926.2,226.6"/><path d="M880.0,343.1 L883.7,347.3 L888.8,349.7 L893.2,349.7 L897.6,350.8 L902.0,350.7 L906.4,351.2 L910.8,351.9"/><path d="M976.7,233.2 L980.2,230.0 L983.3,226.5 L985.0,222.0 L989.9,220.3 L994.8,218.6 L1000.0,218.0 L1003.7,221.2 L1008.4,222.7 L1012.0,226.0 L1015.7,223.8 L1020.0,224.0"/><path d="M619.8,380.0 L620.1,384.3 L622.6,387.9 L623.7,391.9 L621.6,395.6 L621.3,399.8 L619.8,403.7 L619.8,407.9 L621.8,411.6 L619.8,417.6 L614.9,419.6 L609.9,421.5 L609.8,425.7 L607.9,429.4 L603.7,429.7 L600.0,427.5"/><path d="M639.6,380.0 L640.9,384.0 L642.2,388.0 L643.0,392.2 L645.5,395.8 L650.2,399.0 L653.4,403.7 L657.3,404.7 L661.4,404.7 L665.3,405.7 L671.2,409.7 L676.1,410.7 L681.1,411.6 L684.5,407.9 L689.0,405.7 L689.5,401.6 L691.0,397.8 L696.9,396.9 L702.8,395.8 L706.8,389.9"/><path d="M726.6,380.0 L726.5,384.2 L728.6,387.9 L732.8,387.9 L736.5,389.9 L740.3,391.7 L744.4,391.9 L744.2,396.1 L747.1,399.6 L748.3,403.5 L748.3,407.7 L751.8,410.7 L756.3,411.6 L761.2,411.5 L765.5,409.0 L770.1,407.7 L770.3,403.4 L773.8,400.1 L774.0,395.8 L780.0,391.9"/><path d="M772.1,461.1 L770.9,465.2 L768.1,468.6 L767.3,472.8 L766.1,476.9 L767.3,482.2 L770.1,486.8 L771.0,491.8 L769.4,496.7 L770.8,501.7 L770.1,506.6 L767.3,510.7 L764.2,514.5 L759.8,512.3 L755.2,511.0 L750.3,510.5 L748.2,506.8 L747.0,502.9 L746.4,498.7"/><path d="M736.5,522.4 L736.1,526.4 L735.1,530.3 L734.5,534.3 L738.5,535.0 L742.6,535.3 L746.5,536.6 L750.3,538.2 L750.4,543.5 L750.6,548.9 L752.3,554.0 L756.8,552.5 L761.5,553.5 L766.2,553.7 L770.7,551.5 L775.4,553.2 L780.0,552.0"/><path d="M657.4,498.7 L659.6,495.0 L663.3,492.7 L665.7,497.5 L668.5,502.0 L671.2,506.6 L675.0,508.8 L679.1,510.5 L681.9,514.2 L684.0,518.3 L686.1,522.5 L688.8,526.2 L691.0,530.3 L693.3,534.5 L696.4,538.2 L698.9,542.2"/><path d="M621.8,411.6 L626.5,413.5 L631.5,414.5 L635.6,417.6 L637.3,422.3 L639.6,426.8 L641.5,431.4 L645.0,434.9 L647.5,439.3 L647.3,443.4 L647.7,447.3 L649.0,451.2 L649.4,455.2 L650.6,459.7 L650.1,464.4 L651.4,468.9 L651.7,473.5 L651.2,478.2 L651.4,482.8 L653.0,487.6 L652.6,492.7 L652.9,497.7 L653.4,502.6"/><path d="M841.3,399.8 L846.0,397.6 L851.2,397.8 L856.4,398.8 L861.9,398.1 L867.0,399.8 L869.6,403.2 L873.0,405.7 L876.5,409.0 L880.9,411.2 L885.5,412.9 L888.8,416.6 L893.0,416.6 L897.3,416.3 L901.5,417.8 L905.7,415.7 L909.9,417.5 L914.2,417.9 L918.4,416.6 L919.8,422.3 L922.4,427.5 L927.6,428.9 L933.0,428.0 L938.2,429.4 L941.6,432.5 L946.1,433.4 L950.1,435.4 L954.6,434.5 L958.0,431.4"/><path d="M841.3,399.8 L843.8,403.9 L848.5,405.8 L851.2,409.7 L846.8,412.0 L843.3,415.6 L842.9,421.0 L845.8,426.0 L845.3,431.4 L849.5,435.1 L853.2,439.3 L851.6,443.1 L851.2,447.2 L847.6,449.5 L842.9,449.2 L839.6,452.2 L835.4,453.2 L830.5,453.7 L826.4,456.7 L821.5,457.1 L821.5,461.7 L820.4,466.4 L821.5,471.0 L825.3,473.0 L828.5,475.8 L831.4,478.9 L837.4,474.9"/><path d="M780.0,409.7 L784.9,410.2 L789.9,410.2 L795.0,409.9 L799.8,411.6 L804.1,412.4 L808.0,414.0 L811.3,417.5 L815.5,418.4 L819.6,419.6 L819.5,424.7 L821.5,429.4 L820.3,433.7 L816.9,437.0 L815.6,441.3 L812.9,444.7 L809.0,446.5 L805.7,449.2 L803.4,453.7 L802.1,458.6 L799.8,463.1 L794.8,462.1 L789.9,463.0 L785.0,462.9 L780.0,463.1"/><path d="M837.4,474.9 L842.2,473.8 L845.7,470.0 L851.0,470.1 L854.9,467.3 L859.1,465.0 L863.1,465.4 L866.9,467.1 L871.0,467.0 L875.2,468.5 L878.3,472.1 L882.8,473.0 L888.8,473.2 L894.7,473.0"/><path d="M837.4,474.9 L837.8,480.2 L836.7,485.5 L837.4,490.8 L838.5,496.7 L839.3,502.6 L839.1,506.8 L836.7,510.3 L837.5,514.7 L835.4,518.4 L832.7,522.0 L832.0,526.6 L829.4,530.3 L830.4,534.4 L830.9,538.6 L833.4,542.2 L835.2,547.2 L837.4,552.1"/><path d="M799.8,486.8 L805.7,487.2 L811.6,486.8 L815.9,489.4 L819.6,492.7 L823.7,497.0 L825.5,502.6 L829.7,502.4 L833.4,504.6"/><path d="M916.5,475.0 L918.4,480.8 L918.4,486.8 L922.2,491.0 L926.4,494.7 L925.2,499.4 L923.7,504.0 L922.4,508.6 L918.6,513.0 L916.5,518.4 L918.4,522.1 L919.1,526.2 L919.0,530.4 L920.4,534.3 L922.6,538.5 L923.7,542.9 L923.8,547.6 L924.4,552.1"/><path d="M922.4,482.8 L926.1,480.8 L930.2,480.5 L934.1,479.2 L938.2,478.9 L942.3,477.1 L946.2,475.2 L950.1,473.0"/><path d="M847.2,548.1 L851.0,546.4 L855.2,546.5 L859.0,545.1 L863.0,544.2 L867.4,545.3 L870.4,549.2 L874.9,550.1"/><path d="M863.0,380.0 L864.7,384.8 L865.0,389.9 L867.8,393.4 L869.0,397.8"/><path d="M950.1,380.0 L949.5,384.3 L946.6,387.8 L944.5,391.5 L943.1,395.6 L942.2,399.8 L943.7,403.7 L945.4,407.5 L946.1,411.6 L951.0,414.7 L954.0,419.6 L951.7,423.4 L949.9,427.4 L948.1,431.4"/><path d="M958.0,409.7 L956.4,414.2 L953.8,418.2 L952.3,422.8 L949.2,426.6 L948.3,431.4 L950.2,435.9 L953.7,439.5 L954.7,444.6 L958.0,448.3 L959.7,452.5 L958.9,457.0 L959.7,461.4 L960.6,465.7 L960.4,470.1 L965.2,469.0 L970.1,470.8 L974.9,470.1 L980.3,471.4 L984.6,474.9 L988.8,475.6 L992.9,477.2 L997.4,475.8 L1001.5,477.3 L1005.0,473.5 L1009.7,471.1 L1013.6,467.6 L1012.4,462.8 L1011.1,458.0 L1014.6,455.9 L1018.1,453.8 L1020.8,450.7 L1023.8,446.5 L1028.0,443.5 L1030.5,441.1"/><path d="M1001.5,477.3 L999.5,481.2 L996.6,484.6 L998.5,488.3 L1000.6,491.9 L1000.0,496.5 L1001.8,500.3 L1003.9,503.9 L1005.8,509.0 L1008.7,513.6 L1013.9,514.0 L1018.1,517.7 L1023.2,518.4 L1027.0,520.6 L1031.3,521.5 L1035.3,523.2 L1040.1,525.6"/><path d="M1003.9,503.9 L999.3,504.7 L995.2,506.9 L991.0,508.9 L986.8,510.6 L982.1,511.1 L980.3,516.3 L977.3,520.8 L976.6,525.0 L974.1,528.2 L971.3,531.4 L970.1,535.3 L967.7,538.9 L965.4,542.6 L963.8,546.6 L962.9,551.0 L960.4,554.6 L959.5,559.4 L959.0,564.3 L958.0,569.1 L955.6,574.0 L958.3,577.7 L962.0,580.4 L965.2,583.6 L968.9,586.4 L971.4,590.3 L974.9,593.3"/><path d="M926.6,578.8 L931.2,578.8 L934.8,575.7 L939.5,576.2 L943.5,574.0 L947.5,572.7 L951.6,573.4 L955.6,574.0"/><path d="M919.3,482.1 L920.9,485.8 L920.6,490.0 L921.1,494.0 L922.6,497.8 L924.2,501.5 L923.2,505.5 L920.4,508.9 L920.2,513.2 L919.0,517.2 L916.9,520.8 L917.4,525.0 L919.5,528.6 L920.8,532.6 L922.3,536.4 L924.2,540.1 L922.3,544.8 L923.0,549.8 L921.4,554.5 L921.7,559.5 L922.4,564.5 L923.2,569.4 L925.5,573.9 L926.6,578.8"/><path d="M916.9,416.9 L920.9,417.5 L925.0,417.1 L929.0,416.4 L933.0,416.2 L937.1,417.2 L941.1,416.9 L944.9,414.1 L950.0,414.3 L953.4,410.6 L958.0,409.7"/><path d="M1001.5,400.0 L1003.5,404.6 L1004.1,409.5 L1003.9,414.5 L1004.0,419.0 L1006.7,422.8 L1008.4,426.9 L1008.7,431.4 L1013.0,432.8 L1016.0,436.2 L1020.6,437.6 L1023.7,441.5 L1028.0,443.5"/><path d="M749.7,575.5 L753.7,572.9 L757.3,569.8 L761.5,572.2 L765.9,574.2 L770.5,575.5 L774.7,571.7 L780.0,569.8 L783.5,567.7 L786.6,564.9 L790.7,563.6 L794.1,561.4 L797.0,558.4 L800.3,561.2 L805.1,561.2 L808.4,564.1 L813.4,563.6 L818.2,562.3 L823.0,560.9 L827.4,558.4 L830.5,554.5 L834.4,551.5 L838.7,548.9 L842.7,546.1 L847.1,544.1 L852.0,543.3 L856.1,544.7 L860.4,545.1 L864.7,545.1 L869.0,545.2"/><path d="M736.4,530.0 L739.0,533.8 L742.5,536.6 L745.9,539.5 L747.4,544.1 L748.8,548.7 L749.8,553.5 L749.7,558.4 L749.0,562.7 L750.5,567.0 L750.2,571.2 L749.7,575.5 L753.6,579.1 L758.1,582.2 L761.0,586.8 L765.6,587.5 L770.0,588.8 L774.3,590.6 L776.7,595.6 L780.0,600.1 L775.4,602.3 L770.5,603.9"/><path d="M869.0,567.9 L871.2,564.4 L875.0,562.3 L876.6,558.4 L879.1,561.6 L881.0,565.3 L884.2,567.9 L885.2,573.0 L887.9,577.7 L888.0,583.0 L885.6,586.3 L883.1,589.4 L880.4,592.5 L877.8,597.0 L876.6,602.0 L874.7,605.6 L871.6,608.5 L869.7,612.1 L868.2,616.0 L865.3,619.0"/><path d="M884.2,567.9 L889.1,567.9 L893.4,565.0 L898.5,565.9 L903.1,564.1 L907.7,562.3 L912.3,560.9 L917.2,560.5 L922.1,560.3 L924.4,564.5 L926.8,568.6 L931.7,570.9 L933.5,575.5 L937.9,575.2 L942.3,574.8 L946.8,575.3 L951.1,573.4 L955.6,573.9 L960.0,573.6"/><path d="M846.3,530.0 L844.8,534.0 L841.7,537.2 L841.2,541.7 L838.7,545.2"/><path d="M1091.7,140.0 L1091.8,145.2 L1094.7,149.7 L1095.4,154.8 L1093.6,159.4 L1100.9,160.3 L1105.9,162.5 L1110.2,165.9 L1111.6,170.7 L1113.9,175.1 L1119.4,169.6 L1120.4,174.2 L1121.3,178.8 L1124.0,182.0 L1124.6,186.4 L1126.8,189.9 L1132.3,193.6 L1131.4,197.8 L1128.6,201.0 L1129.8,205.6 L1131.9,209.8 L1134.2,213.9 L1136.0,221.3"/><path d="M1169.3,138.2 L1174.8,143.7 L1180.5,143.5 L1185.9,141.9 L1187.5,145.7 L1189.9,149.1 L1191.7,152.8 L1193.3,156.6 L1196.8,153.6 L1200.7,151.1 L1205.3,150.8 L1209.0,147.6 L1213.6,147.4 L1221.0,145.6 L1221.9,149.7 L1224.7,152.9 L1229.1,154.3 L1232.5,157.2 L1235.8,160.3"/><path d="M1073.0,92.0 L1072.3,96.7 L1069.5,100.7 L1069.2,105.5 L1068.0,110.0 L1069.8,113.6 L1070.1,117.9 L1073.1,121.0 L1074.0,125.0 L1077.6,127.9 L1081.0,131.1 L1084.2,134.5 L1087.7,137.5 L1091.7,140.0"/><path d="M1120.0,92.0 L1122.7,95.8 L1126.3,98.9 L1129.3,102.5 L1132.7,105.8 L1135.0,110.0 L1139.0,111.7 L1143.3,112.1 L1147.4,113.1 L1151.8,112.5 L1155.9,114.0 L1160.0,115.0 L1160.9,119.1 L1162.9,122.8 L1165.6,126.2 L1166.3,130.4 L1166.8,134.7 L1169.3,138.2"/></g>
<path d="M600.0,176.0 L605.7,176.0 L611.4,176.5 L617.0,177.6 L622.2,177.8 L627.2,179.1 L632.3,179.9 L637.6,179.1 L642.7,179.7 L647.8,180.4 L652.9,181.1 L658.0,182.0 L663.2,181.4 L668.3,180.1 L673.6,179.9 L678.7,179.0 L684.0,179.0 L688.5,181.8 L693.6,183.3 L698.6,184.8 L703.3,187.8 L707.0,192.0 L716.0,193.5 L721.5,196.8 L728.0,197.6 L733.5,200.8 L739.3,200.6 L745.2,201.8 L751.0,200.8 L759.0,206.6 L763.8,204.2 L768.0,200.8 L774.1,198.3 L779.7,194.8 L785.7,192.0 L791.3,189.5 L797.3,188.5 L803.0,186.3 L808.8,185.0 L814.6,184.7 L820.5,184.8 L825.6,184.4 L830.6,183.5 L835.7,184.0 L840.8,184.0 L846.2,181.4 L851.1,178.2 L856.0,174.9 L861.0,171.8 L865.1,168.6 L868.8,164.9 L872.7,161.6 L876.7,158.1 L881.5,156.0 L885.8,153.0 L882.0,146.5 L878.5,139.9 L875.6,135.5 L879.5,132.2 L883.4,128.8 L886.3,124.5 L890.0,121.0 L895.7,122.6 L901.4,124.4 L907.3,125.2 L913.0,126.8 L917.9,123.1 L923.5,120.7 L928.9,117.7 L933.6,113.8 L938.5,112.3 L943.0,110.1 L947.8,108.3 L952.3,106.0 L956.8,103.6 L961.4,98.0 L965.5,92.0" fill="none" stroke="#c27480" stroke-width="1.8"/>
<path d="M1111.5,242.9 L1115.1,239.9 L1118.5,236.8 L1122.5,234.4 L1126.0,231.3 L1129.2,228.4 L1133.2,226.8 L1137.2,225.2 L1140.5,222.5 L1143.2,219.2 L1145.3,215.6 L1147.0,211.7 L1149.6,208.4 L1152.0,205.0 L1159.3,202.2 L1163.7,208.0 L1168.0,208.3 L1172.3,209.0 L1176.7,208.9 L1181.0,209.5 L1182.5,203.7 L1180.6,199.2 L1178.0,195.0 L1182.5,195.1 L1186.7,192.9 L1191.3,193.1 L1195.6,192.0 L1198.9,189.2 L1201.2,185.5 L1204.2,182.4 L1207.8,179.8 L1210.0,176.0 L1214.0,173.1 L1218.8,171.8 L1221.6,175.5 L1224.6,179.0 L1226.3,174.6 L1229.7,171.2 L1232.3,167.3 L1233.9,162.8 L1236.2,158.7 L1235.6,153.9 L1236.7,149.1 L1236.9,144.3 L1237.0,139.5 L1235.6,134.6 L1233.4,130.1 L1231.6,125.4 L1235.0,123.2 L1238.4,121.0 L1241.2,118.1 L1244.2,115.4 L1247.5,113.1 L1251.4,115.4 L1256.1,115.3 L1260.0,117.6 L1264.4,118.5 L1268.6,120.1 L1270.3,116.1 L1270.2,111.7 L1272.1,107.8 L1275.4,104.4 L1276.7,99.7 L1278.6,95.5 L1281.8,92.0" fill="none" stroke="#c27480" stroke-width="1.8"/>
<path d="M600.0,503.5 L603.6,503.5 L607.0,504.4 L610.7,503.9 L614.0,505.6 L617.5,506.4 L619.5,504.1 L622.2,502.4 L623.7,499.6 L626.2,497.7 L628.5,500.3 L630.4,503.1 L630.9,506.8 L632.2,509.9 L635.0,512.2 L637.0,514.6 L639.6,516.4 L640.4,519.8 L643.3,521.4 L645.1,523.9 L645.7,527.3 L645.7,530.6 L643.7,533.8 L643.4,537.2 L643.7,540.5 L644.0,543.9 L643.7,547.2 L642.1,550.0 L641.5,553.3 L638.2,555.3 L637.9,558.8 L636.0,561.3 L633.2,562.9 L630.7,564.8 L629.1,567.6 L627.4,570.3 L627.5,573.5 L627.2,576.5 L625.7,579.2 L626.0,582.5 L623.2,584.8 L623.3,588.0 L626.6,587.6 L630.0,589.0 L633.3,587.3 L636.6,587.7 L639.9,587.3 L643.3,587.8 L646.6,588.0 L648.0,591.3 L648.9,594.6 L647.4,598.2 L649.1,601.4 L649.7,604.8 L649.5,608.3 L652.1,610.9 L653.9,614.1 L656.2,617.0 L658.2,620.0" fill="none" stroke="#c27480" stroke-width="1.5"/>
<path d="M739.8,620.0 L742.0,617.8 L744.0,615.4 L745.3,612.5 L748.5,611.0 L750.2,608.5 L751.4,605.4 L754.8,603.5 L758.9,604.9 L762.6,604.3 L766.0,602.5 L767.6,605.3 L771.1,606.2 L771.9,609.8 L774.7,611.3 L777.6,613.4 L781.5,613.6 L784.6,615.3 L786.3,619.4 L790.0,620.0" fill="none" stroke="#c27480" stroke-width="1.5"/>
<path d="M1083.4,577.8L1077.9,599.6" stroke="#c27480" stroke-width="1.5"/>
<g font-size="11.5" fill="#3a3a3a">
<text x="780" y="273.5" text-anchor="middle">银川</text>
<text x="896" y="288" text-anchor="middle">太原</text>
<text x="931" y="284.6" text-anchor="middle">石家庄</text>
<text x="699.5" y="341" text-anchor="middle">西宁</text>
<text x="736" y="354" text-anchor="middle">兰州</text>
<text x="963.5" y="241" text-anchor="middle">北京</text>
<text x="979" y="284" text-anchor="middle">天津</text>
<text x="975.6" y="316" text-anchor="middle">济南</text>
<text x="913.5" y="358.8" text-anchor="middle">郑州</text>
<text x="828" y="367" text-anchor="middle">西安</text>
<text x="741" y="472" text-anchor="middle">成都</text>
<text x="786" y="494" text-anchor="middle">重庆</text>
<text x="788" y="530" text-anchor="middle">贵阳</text>
<text x="927.5" y="448.6" text-anchor="middle">武汉</text>
<text x="955.5" y="489" text-anchor="middle">南昌</text>
<text x="903" y="521" text-anchor="middle">长沙</text>
<text x="907.5" y="601" text-anchor="middle">广州</text>
<text x="818" y="607" text-anchor="middle">南宁</text>
<text x="980" y="422" text-anchor="middle">合肥</text>
<text x="1010" y="417" text-anchor="middle">南京</text>
<text x="1064" y="434" text-anchor="middle">上海</text>
<text x="1034.5" y="479.8" text-anchor="middle">杭州</text>
<text x="994.5" y="553" text-anchor="middle">福州</text>
<text x="1057" y="587.5" text-anchor="middle">台北</text>
<text x="1128" y="145" text-anchor="middle">长春</text>
<text x="1096" y="197" text-anchor="middle">沈阳</text>
<text x="1150" y="93" text-anchor="middle">哈尔滨</text>
</g><g>
<circle cx="780.5" cy="281" r="3.6" fill="#fff" stroke="#ee5a5a" stroke-width="1"/><circle cx="780.5" cy="281" r="1.6" fill="#ee5a5a"/>
<circle cx="896.5" cy="295.5" r="3.6" fill="#fff" stroke="#ee5a5a" stroke-width="1"/><circle cx="896.5" cy="295.5" r="1.6" fill="#ee5a5a"/>
<circle cx="931" cy="291.5" r="3.6" fill="#fff" stroke="#ee5a5a" stroke-width="1"/><circle cx="931" cy="291.5" r="1.6" fill="#ee5a5a"/>
<circle cx="699.7" cy="323.7" r="3.6" fill="#fff" stroke="#ee5a5a" stroke-width="1"/><circle cx="699.7" cy="323.7" r="1.6" fill="#ee5a5a"/>
<circle cx="736.6" cy="336.7" r="3.6" fill="#fff" stroke="#ee5a5a" stroke-width="1"/><circle cx="736.6" cy="336.7" r="1.6" fill="#ee5a5a"/>
<circle cx="-50" cy="-50" r="3.6" fill="#fff" stroke="#ee5a5a" stroke-width="1"/><circle cx="-50" cy="-50" r="1.6" fill="#ee5a5a"/>
<circle cx="980" cy="266.8" r="3.6" fill="#fff" stroke="#ee5a5a" stroke-width="1"/><circle cx="980" cy="266.8" r="1.6" fill="#ee5a5a"/>
<circle cx="976.7" cy="322.9" r="3.6" fill="#fff" stroke="#ee5a5a" stroke-width="1"/><circle cx="976.7" cy="322.9" r="1.6" fill="#ee5a5a"/>
<circle cx="915" cy="365.5" r="3.6" fill="#fff" stroke="#ee5a5a" stroke-width="1"/><circle cx="915" cy="365.5" r="1.6" fill="#ee5a5a"/>
<circle cx="829" cy="374.7" r="3.6" fill="#fff" stroke="#ee5a5a" stroke-width="1"/><circle cx="829" cy="374.7" r="1.6" fill="#ee5a5a"/>
<circle cx="741.5" cy="456" r="3.6" fill="#fff" stroke="#ee5a5a" stroke-width="1"/><circle cx="741.5" cy="456" r="1.6" fill="#ee5a5a"/>
<circle cx="786" cy="477.3" r="3.6" fill="#fff" stroke="#ee5a5a" stroke-width="1"/><circle cx="786" cy="477.3" r="1.6" fill="#ee5a5a"/>
<circle cx="788" cy="537.7" r="3.6" fill="#fff" stroke="#ee5a5a" stroke-width="1"/><circle cx="788" cy="537.7" r="1.6" fill="#ee5a5a"/>
<circle cx="928" cy="456" r="3.6" fill="#fff" stroke="#ee5a5a" stroke-width="1"/><circle cx="928" cy="456" r="1.6" fill="#ee5a5a"/>
<circle cx="956" cy="496" r="3.6" fill="#fff" stroke="#ee5a5a" stroke-width="1"/><circle cx="956" cy="496" r="1.6" fill="#ee5a5a"/>
<circle cx="906" cy="520" r="3.6" fill="#fff" stroke="#ee5a5a" stroke-width="1"/><circle cx="906" cy="520" r="1.6" fill="#ee5a5a"/>
<circle cx="908.5" cy="608" r="3.6" fill="#fff" stroke="#ee5a5a" stroke-width="1"/><circle cx="908.5" cy="608" r="1.6" fill="#ee5a5a"/>
<circle cx="819" cy="613" r="3.6" fill="#fff" stroke="#ee5a5a" stroke-width="1"/><circle cx="819" cy="613" r="1.6" fill="#ee5a5a"/>
<circle cx="980" cy="429" r="3.6" fill="#fff" stroke="#ee5a5a" stroke-width="1"/><circle cx="980" cy="429" r="1.6" fill="#ee5a5a"/>
<circle cx="1009" cy="422.5" r="3.6" fill="#fff" stroke="#ee5a5a" stroke-width="1"/><circle cx="1009" cy="422.5" r="1.6" fill="#ee5a5a"/>
<circle cx="1058" cy="442" r="3.6" fill="#fff" stroke="#ee5a5a" stroke-width="1"/><circle cx="1058" cy="442" r="1.6" fill="#ee5a5a"/>
<circle cx="1035" cy="463" r="3.6" fill="#fff" stroke="#ee5a5a" stroke-width="1"/><circle cx="1035" cy="463" r="1.6" fill="#ee5a5a"/>
<circle cx="1017.8" cy="549" r="3.6" fill="#fff" stroke="#ee5a5a" stroke-width="1"/><circle cx="1017.8" cy="549" r="1.6" fill="#ee5a5a"/>
<circle cx="1059" cy="570" r="3.6" fill="#fff" stroke="#ee5a5a" stroke-width="1"/><circle cx="1059" cy="570" r="1.6" fill="#ee5a5a"/>
<circle cx="1128" cy="152" r="3.6" fill="#fff" stroke="#ee5a5a" stroke-width="1"/><circle cx="1128" cy="152" r="1.6" fill="#ee5a5a"/>
<circle cx="1095" cy="205" r="3.6" fill="#fff" stroke="#ee5a5a" stroke-width="1"/><circle cx="1095" cy="205" r="1.6" fill="#ee5a5a"/>
<circle cx="1150.4" cy="100.9" r="3.6" fill="#fff" stroke="#ee5a5a" stroke-width="1"/><circle cx="1150.4" cy="100.9" r="1.6" fill="#ee5a5a"/>
</g>
<g font-size="11" fill="#4e7bbd" text-anchor="middle"><text x="1032" y="276">渤海</text><text x="1089" y="372">黄海</text><text x="1109" y="484">东海</text></g>
<path d="M709.2,599.6 C704,593 700.5,588 700.8,583 C700.5,578 701,573 702.5,570 C703,566 703.5,561 705,558 C706,553 710,549 716,548.5 C720,547.5 723,545.5 727,546 C732,546.5 735,551 734.8,556 C734.5,561 730,566 727.5,570 C727.5,575 725,580 721,584 C718,588 715,593 709.2,599.6Z" fill="#5ec0f0"/>
<path d="M968.7,241 L960.9,231.25 A10,10 0 1 1 976.5,231.25 Z" fill="#5ec0f0"/>
<path d="M1026,252 L1018.2,242.25 A10,10 0 1 1 1033.8,242.25 Z" fill="#5ec0f0"/><circle cx="1026" cy="235.5" r="4.3" fill="#fff"/>
<path d="M1031,247 L1023.2,237.25 A10,10 0 1 1 1038.8,237.25 Z" fill="#5ec0f0"/><circle cx="1031" cy="230.5" r="4.3" fill="#fff"/>
<path d="M983,334 L975.2,324.25 A10,10 0 1 1 990.8,324.25 Z" fill="#5ec0f0"/><circle cx="983" cy="317.5" r="4.3" fill="#fff"/>
<path d="M985,347 L977.2,337.25 A10,10 0 1 1 992.8,337.25 Z" fill="#5ec0f0"/><circle cx="985" cy="330.5" r="4.3" fill="#fff"/>
<path d="M1008.4,360 L1000.6,350.25 A10,10 0 1 1 1016.2,350.25 Z" fill="#5ec0f0"/><circle cx="1008.4" cy="343.5" r="4.3" fill="#fff"/>
<path d="M1038,338 L1030.2,328.25 A10,10 0 1 1 1045.8,328.25 Z" fill="#5ec0f0"/><circle cx="1038" cy="321.5" r="4.3" fill="#fff"/>
<path d="M1041,332 L1033.2,322.25 A10,10 0 1 1 1048.8,322.25 Z" fill="#5ec0f0"/><circle cx="1041" cy="315.5" r="4.3" fill="#fff"/>
<path d="M985.3,375 L977.5,365.25 A10,10 0 1 1 993.1,365.25 Z" fill="#5ec0f0"/><circle cx="985.3" cy="358.5" r="4.3" fill="#fff"/>
<path d="M841,370 L833.2,360.25 A10,10 0 1 1 848.8,360.25 Z" fill="#5ec0f0"/><circle cx="841" cy="353.5" r="4.3" fill="#fff"/>
<path d="M1022,418 L1014.2,408.25 A10,10 0 1 1 1029.8,408.25 Z" fill="#5ec0f0"/><circle cx="1022" cy="401.5" r="4.3" fill="#fff"/>
<path d="M1032,426 L1024.2,416.25 A10,10 0 1 1 1039.8,416.25 Z" fill="#5ec0f0"/><circle cx="1032" cy="409.5" r="4.3" fill="#fff"/>
<path d="M883.8,561 L876.0,551.25 A10,10 0 1 1 891.6,551.25 Z" fill="#5ec0f0"/><circle cx="883.8" cy="544.5" r="4.3" fill="#fff"/>
<path d="M1058.8,321 L1051.0,311.25 A10,10 0 1 1 1066.6,311.25 Z" fill="#f22f3f"/><circle cx="1058.8" cy="304.5" r="4.3" fill="#fff"/>
<path d="M958,355.5 L950.2,345.75 A10,10 0 1 1 965.8,345.75 Z" fill="#f22f3f"/><circle cx="958" cy="339.0" r="4.3" fill="#fff"/>
<path d="M1017.3,357 L1009.5,347.25 A10,10 0 1 1 1025.1,347.25 Z" fill="#f22f3f"/><circle cx="1017.3" cy="340.5" r="4.3" fill="#fff"/>
<path d="M833.4,374 L825.6,364.25 A10,10 0 1 1 841.2,364.25 Z" fill="#f22f3f"/><circle cx="833.4" cy="357.5" r="4.3" fill="#fff"/>
<path d="M1054.7,438 L1046.9,428.25 A10,10 0 1 1 1062.5,428.25 Z" fill="#f22f3f"/><circle cx="1054.7" cy="421.5" r="4.3" fill="#fff"/>
<path d="M1044.6,453 L1036.8,443.25 A10,10 0 1 1 1052.4,443.25 Z" fill="#f22f3f"/><circle cx="1044.6" cy="436.5" r="4.3" fill="#fff"/>
<path d="M906.4,517 L898.6,507.25 A10,10 0 1 1 914.2,507.25 Z" fill="#f22f3f"/><circle cx="906.4" cy="500.5" r="4.3" fill="#fff"/>
<path d="M883.8,541 L876.0,531.25 A10,10 0 1 1 891.6,531.25 Z" fill="#f22f3f"/><circle cx="883.8" cy="524.5" r="4.3" fill="#fff"/>
<circle cx="967.5" cy="245.5" r="5.5" fill="#2e7de2" stroke="#fff" stroke-width="1.2"/>
<rect x="600" y="92" width="757" height="48" fill="#fff" fill-opacity="0.88"/>
<text x="614" y="120" font-size="12" fill="#5a6776">数据总数</text><text x="670.5" y="121.5" font-size="16" fill="#4aa3e8">19652</text><text x="718" y="120.5" font-size="12" fill="#5a6776">个</text>
<rect x="840.5" y="172.5" width="255" height="53" fill="#fafbfd" fill-opacity="0.97" stroke="#5aa8e8" stroke-width="1"/>
<g font-size="12" font-weight="bold" fill="#5c6370"><text x="849" y="195">北京市朝阳区崔各庄镇北控水务大厦保利·国</text><text x="849" y="212">际广场</text></g>
<rect x="1321.6" y="576.3" width="27" height="27" fill="#fff"/><circle cx="1335" cy="589.6" r="6" fill="#fff" stroke="#ccc" stroke-width="1"/><circle cx="1335" cy="589.6" r="5" fill="#666"/>
<path d="M603,612 L614,606 L611,617 L608,613Z" fill="#1a8fe6"/><path d="M603,612 L608,613 L611,617Z" fill="#f5c22e"/>
<text x="617" y="615" font-size="10" fill="#444">高德地图</text><text x="661" y="621" font-size="12.3" fill="#555">© 2019 AutoNavi - GS(2018)1709号</text>
</svg><!--/MAP-->
<!-- P3 -->
<div class="panel" style="left:1373px;top:92px;width:526px;height:260px">
  <div class="ph"><div class="bar"></div><div class="ttl">大区异常数据排名</div>
    <div class="btns" style="left:366px;top:11px"><div class="btn on">当日</div><div class="btn">昨日</div><div class="btn">当月</div></div>
  </div>
</div>
<svg class="abs" style="left:1373px;top:140px" width="526" height="212" viewBox="1373 140 526 212" font-family="Liberation Sans">
  <g fill="#555" font-size="11" text-anchor="end">
    <text x="1426.5" y="186">中部大区</text><text x="1426.5" y="222">北部大区</text><text x="1426.5" y="258">西部大区</text><text x="1426.5" y="294">东部大区</text>
  </g>
  <rect x="1438.8" y="177.7" width="354.2" height="8.4" fill="#f5606c"/>
  <rect x="1438.8" y="213.7" width="337.2" height="8.4" fill="#f0b05a"/>
  <rect x="1438.8" y="249.7" width="185.2" height="8.4" fill="#5fc0f1"/>
  <rect x="1438.8" y="285.7" width="35.7" height="8.4" fill="#5fc0f1"/>
  <g font-size="9.5" font-weight="bold" letter-spacing="0.3">
    <text x="1798.6" y="183.7" fill="#f5606c" textLength="29.5" lengthAdjust="spacingAndGlyphs">1.26%</text>
    <text x="1782" y="219.7" fill="#f0b05a" textLength="24" lengthAdjust="spacingAndGlyphs">1.2%</text>
    <text x="1629.5" y="255.7" fill="#5fc0f1" textLength="30" lengthAdjust="spacingAndGlyphs">0.66%</text>
    <text x="1479.5" y="291.7" fill="#5fc0f1" textLength="30" lengthAdjust="spacingAndGlyphs">0.13%</text>
  </g>
  <g stroke="#d5def0" stroke-width="1" fill="none">
    <path d="M1438.5,307H1890.5M1438.5,299V307M1551,299V307M1663.8,299V307M1776.5,299V307M1890,299V307"/>
  </g>
  <g fill="#666" font-size="9.6" text-anchor="middle">
    <text x="1438.8" y="322">0</text><text x="1551.5" y="322">0.4%</text><text x="1664.5" y="322">0.8%</text><text x="1777" y="322">1.2%</text><text x="1890.5" y="322" text-anchor="end">1.6%</text>
  </g>
</svg>
<!-- P4 -->
<div class="panel" style="left:59px;top:360px;width:525px;height:260px">
  <div class="ph"><div class="bar"></div><div class="ttl">主要数据异常仪表品牌</div>
    <div class="abs" style="left:345px;top:12px;width:120px;height:26px;border:1px solid #dcdfe6;border-radius:3px;background:#fff;font-size:12px;color:#555;line-height:24px;padding-left:7px">全部
      <svg class="abs" style="right:8px;top:9px" width="9" height="6" viewBox="0 0 9 6"><path d="M1,1L4.5,4.5L8,1" fill="none" stroke="#666" stroke-width="1.1"/></svg>
    </div>
    <div class="more" style="left:481px;top:15px">更多</div>
  </div>
</div>
<svg class="abs" style="left:59px;top:408px" width="525" height="212" viewBox="59 408 525 212" font-family="Liberation Sans">
  <circle cx="321" cy="514" r="39" fill="#80d0fe"/>
  <path d="M321,514L303.23,479.28A39,39 0 0 1 321.00,475.00Z" fill="#efd673" stroke="#fff" stroke-width="0.8"/>
  <path d="M321,475V514" stroke="#fff" stroke-width="1"/>
  <path d="M321,475Q319,455 317.5,450" fill="none" stroke="#b9dc86" stroke-width="1"/>
  <path d="M311.5,476.5Q312,468 306,469L269,472.5" fill="none" stroke="#efd673" stroke-width="1"/>
  <path d="M330.5,552Q331,562 340.5,575.5" fill="none" stroke="#80d0fe" stroke-width="1"/>
  <g fill="#4a5564" font-size="9.5" font-weight="bold">
    <text x="250.8" y="456" textLength="57" lengthAdjust="spacingAndGlyphs">北京天健：0%</text>
    <text x="170.8" y="478" textLength="88" lengthAdjust="spacingAndGlyphs">上海益伦环境：7.52%</text>
    <text x="347" y="580" textLength="86" lengthAdjust="spacingAndGlyphs">未知制造商：92.48%</text>
  </g>
</svg>
<!-- P5 -->
<div class="panel" style="left:1373px;top:360px;width:526px;height:260px">
  <div class="ph"><div class="bar"></div><div class="ttl">异常类型</div>
    <div class="btns" style="left:260px;top:11px"><div class="btn on">当日</div><div class="btn">昨日</div><div class="btn">当月</div></div>
    <div class="btns b2" style="left:415.7px;top:11px"><div class="btn">同比</div><div class="btn">环比</div></div>
  </div>
</div>
<svg class="abs" style="left:1373px;top:408px" width="526" height="212" viewBox="1373 408 526 212" font-family="Liberation Sans">
  <g stroke="#ececec" stroke-width="1"><path d="M1557.6,432V575M1668.4,432V575M1779.5,432V575M1890.5,432V575"/></g>
  <path d="M1447.3,432V575" stroke="#dbe2f0" stroke-width="1.2"/>
  <rect x="1447.8" y="499" width="360.2" height="8.6" fill="#f5606c"/>
  <text x="1814" y="506.6" font-size="10" font-weight="bold" fill="#f5606c" textLength="33.5" lengthAdjust="spacingAndGlyphs">163519</text>
  <g fill="#666" font-size="10" text-anchor="middle">
    <text x="1447.5" y="590.5">0</text><text x="1558" y="590.5">50k</text><text x="1669" y="590.5">100k</text><text x="1780" y="590.5">150k</text><text x="1890.5" y="590.5" text-anchor="end">200k</text>
  </g>
  <text x="0" y="0" transform="translate(1432.5,501.8) rotate(45)" text-anchor="end" font-size="10" fill="#666" textLength="59.5" lengthAdjust="spacingAndGlyphs">指定上下限判别</text>
</svg>
<!-- P6 -->
<div class="panel" style="left:59px;top:628px;width:912px;height:276px">
  <div class="ph"><div class="bar"></div><div class="ttl">异常信息列表</div><div class="more" style="left:867.5px;top:14.5px">更多</div></div>
  <div class="abs thead" style="left:0;top:48px;width:912px;height:38px"><div class="hc" style="width:49px">序<br>号</div><div class="hc" style="width:191.5px">所属水厂</div><div class="hc" style="width:96px">设备名称</div><div class="hc" style="width:191.5px">数据名称</div><div class="hc" style="width:191px">数据异常值</div><div class="hc" style="width:55.5px">单位</div><div class="hc" style="width:120px">数据异常时间</div><div class="hc" style="width:18px;border-right:none"></div></div>
  <div class="abs" style="left:0;top:86px;width:894px;height:190px;overflow:hidden"><div class="rrow" style="top:0px"><div class="rc" style="width:49px">1</div><div class="rc" style="width:191.5px">海阳北控</div><div class="rc two" style="width:96px">好氧池污泥<br>浓度计</div><div class="rc" style="width:191.5px">实测MLSS</div><div class="rc" style="width:191px">5.271</div><div class="rc two" style="width:55.5px">mg/<br>L</div><div class="rc two" style="width:120px">2019-07-03 10:3<br>4:52</div></div><div class="rrow" style="top:37px"><div class="rc" style="width:49px">2</div><div class="rc" style="width:191.5px">海阳北控</div><div class="rc two" style="width:96px">好氧池污泥<br>浓度计</div><div class="rc" style="width:191.5px">实测MLSS</div><div class="rc" style="width:191px">5.266</div><div class="rc two" style="width:55.5px">mg/<br>L</div><div class="rc two" style="width:120px">2019-07-03 10:3<br>4:47</div></div><div class="rrow" style="top:74px"><div class="rc" style="width:49px">3</div><div class="rc" style="width:191.5px">海阳北控</div><div class="rc two" style="width:96px">好氧池污泥<br>浓度计</div><div class="rc" style="width:191.5px">实测MLSS</div><div class="rc" style="width:191px">5.264</div><div class="rc two" style="width:55.5px">mg/<br>L</div><div class="rc two" style="width:120px">2019-07-03 10:3<br>4:44</div></div><div class="rrow" style="top:111px"><div class="rc" style="width:49px">4</div><div class="rc" style="width:191.5px">海阳北控</div><div class="rc two" style="width:96px">好氧池污泥<br>浓度计</div><div class="rc" style="width:191.5px">实测MLSS</div><div class="rc" style="width:191px">5.275</div><div class="rc two" style="width:55.5px">mg/<br>L</div><div class="rc two" style="width:120px">2019-07-03 10:3<br>4:39</div></div><div class="rrow" style="top:148px"><div class="rc" style="width:49px">5</div><div class="rc" style="width:191.5px">海阳北控</div><div class="rc two" style="width:96px">好氧池污泥<br>浓度计</div><div class="rc" style="width:191.5px">实测MLSS</div><div class="rc" style="width:191px">5.278</div><div class="rc two" style="width:55.5px">mg/<br>L</div><div class="rc two" style="width:120px">2019-07-03 10:3<br>4:36</div></div><div class="rrow" style="top:185px"><div class="rc" style="width:49px">6</div><div class="rc" style="width:191.5px">海阳北控</div><div class="rc two" style="width:96px">好氧池污泥<br>浓度计</div><div class="rc" style="width:191.5px">实测MLSS</div><div class="rc" style="width:191px">5.270</div><div class="rc two" style="width:55.5px">mg/<br>L</div><div class="rc two" style="width:120px">2019-07-03 10:3<br>4:33</div></div></div>
  <div class="abs" style="left:894.5px;top:86px;width:17.5px;height:190px;background:#f1f1f1">
    <div class="abs" style="left:4px;top:7px;width:0;height:0;border-left:4px solid transparent;border-right:4px solid transparent;border-bottom:4px solid #a3a3a3"></div>
    <div class="abs" style="left:2px;top:17px;width:13px;height:16px;background:#c1c1c1"></div>
    <div class="abs" style="left:4px;top:179px;width:0;height:0;border-left:4px solid transparent;border-right:4px solid transparent;border-top:4px solid #505050"></div>
  </div>
</div>
<!-- P7 -->
<div class="panel" style="left:987px;top:628px;width:912px;height:276px">
  <div class="ph"><div class="bar"></div><div class="ttl">异常数据排名</div>
    <div class="btns" style="left:646px;top:11px"><div class="btn on">当日</div><div class="btn">昨日</div><div class="btn">当月</div></div>
    <div class="btns b2" style="left:801.4px;top:11px"><div class="btn">同比</div><div class="btn">环比</div></div>
  </div>
  <div class="abs thead2" style="left:0;top:48px;width:912px;height:26.5px"><div class="hc2" style="width:65px;text-align:center">序号</div><div class="hc2" style="width:414px;text-align:center">数据名称</div><div class="hc2" style="width:415px;padding-left:16px">异常率</div><div class="hc2" style="width:18px;border-right:none"></div></div>
  <div class="abs" style="left:0;top:74.5px;width:894px;height:202px;overflow:hidden"><div class="brow" style="top:0.0px;background:#fff"><div class="bc" style="width:65px">1</div><div class="bc" style="width:414px">实测MLSS</div><div class="bc" style="width:415px;border-right:none;position:relative"><div class="trk"><div class="fil" style="width:29.3px;background:#f5606c"></div></div><div class="pct">8.62%</div></div></div><div class="brow" style="top:32.2px;background:#fff"><div class="bc" style="width:65px">2</div><div class="bc" style="width:414px">实测ORP</div><div class="bc" style="width:415px;border-right:none;position:relative"><div class="trk"><div class="fil" style="width:17.2px;background:#f0b05a"></div></div><div class="pct">5.07%</div></div></div><div class="brow" style="top:64.4px;background:#fff"><div class="bc" style="width:65px">3</div><div class="bc" style="width:414px">实测温度</div><div class="bc" style="width:415px;border-right:none;position:relative"><div class="trk"><div class="fil" style="width:11.2px;background:#4aa8ee"></div></div><div class="pct">3.19%</div></div></div><div class="brow" style="top:96.6px;background:#e8f4fd"><div class="bc" style="width:65px">4</div><div class="bc" style="width:414px">实测PH</div><div class="bc" style="width:415px;border-right:none;position:relative"><div class="trk"><div class="fil" style="width:9.3px;background:#4aa8ee"></div></div><div class="pct">2.68%</div></div></div><div class="brow" style="top:128.8px;background:#fff"><div class="bc" style="width:65px">5</div><div class="bc" style="width:414px">实测COD</div><div class="bc" style="width:415px;border-right:none;position:relative"><div class="trk"><div class="fil" style="width:5.4px;background:#4aa8ee"></div></div><div class="pct">1.42%</div></div></div><div class="brow" style="top:161.0px;background:#fff"><div class="bc" style="width:65px">6</div><div class="bc" style="width:414px">实测DO</div><div class="bc" style="width:415px;border-right:none;position:relative"><div class="trk"><div class="fil" style="width:2.5px;background:#4aa8ee"></div></div><div class="pct">0.71%</div></div></div><div class="brow" style="top:193.2px;background:#fff"><div class="bc" style="width:65px">7</div><div class="bc" style="width:414px">实测NH3</div><div class="bc" style="width:415px;border-right:none;position:relative"><div class="trk"><div class="fil" style="width:2px;background:#4aa8ee"></div></div><div class="pct">0.54%</div></div></div></div>
  <div class="abs" style="left:894px;top:74.5px;width:18px;height:202px;background:#f1f1f1">
    <div class="abs" style="left:5px;top:8px;width:0;height:0;border-left:4px solid transparent;border-right:4px solid transparent;border-bottom:4px solid #a3a3a3"></div>
    <div class="abs" style="left:2.5px;top:18px;width:13px;height:16px;background:#c1c1c1"></div>
    <div class="abs" style="left:5px;top:190px;width:0;height:0;border-left:4px solid transparent;border-right:4px solid transparent;border-top:4px solid #505050"></div>
  </div>
</div>
</body></html>
